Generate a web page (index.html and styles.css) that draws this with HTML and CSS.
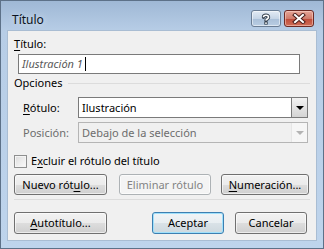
FILE: index.html
```html
<!DOCTYPE html>
<html lang="es">
<head>
    <meta charset="UTF-8">
    <title>Título</title>
    <link rel="stylesheet" href="styles.css">
</head>
<body>
    <div class="window">
        <div class="titlebar">
            <span class="caption">Título</span>
            <div class="cap-buttons">
                <span class="cap-btn help">
                    <svg width="14" height="12" viewBox="0 0 14 12">
                        <path d="M4.5 4.2 C4.5 1.6 9.5 1.6 9.5 4.2 C9.5 6 7 6 7 7.6" fill="none" stroke="#34404e" stroke-width="3.4" stroke-linecap="round"/>
                        <rect x="5.3" y="8.6" width="3.4" height="3" fill="#34404e"/>
                        <path d="M4.5 4.2 C4.5 1.6 9.5 1.6 9.5 4.2 C9.5 6 7 6 7 7.6" fill="none" stroke="#fff" stroke-width="1.6"/>
                        <rect x="6.2" y="9.4" width="1.6" height="1.5" fill="#fff"/>
                    </svg>
                </span>
                <span class="cap-btn close">
                    <svg width="16" height="11" viewBox="0 0 16 11">
                        <path d="M4 2 L12 9 M12 2 L4 9" stroke="#4a1d1a" stroke-width="4" stroke-linecap="square"/>
                        <path d="M4 2 L12 9 M12 2 L4 9" stroke="#fff" stroke-width="2" stroke-linecap="square"/>
                    </svg>
                </span>
            </div>
        </div>

        <div class="client">
            <div class="field-label"><u>T</u>ítulo:</div>
            <div class="textbox"><span class="value">Ilustración 1</span><span class="caret"></span></div>

            <div class="group-title">
                <span>Opciones</span>
                <span class="rule"></span>
            </div>

            <div class="opt-row">
                <span class="opt-label"><u>R</u>ótulo:</span>
                <div class="combo">
                    <span class="combo-text">Ilustración</span>
                    <span class="drop"><span class="arrow"></span></span>
                </div>
            </div>
            <div class="opt-row disabled">
                <span class="opt-label">Posición:</span>
                <div class="combo">
                    <span class="combo-text">Debajo de la selección</span>
                    <span class="drop"><span class="arrow"></span></span>
                </div>
            </div>

            <div class="check-row">
                <span class="checkbox"></span>
                <span>E<u>x</u>cluir el rótulo del título</span>
            </div>

            <div class="btn-row">
                <span class="btn w-93">Nuevo rót<u>u</u>lo...</span>
                <span class="btn w-92 off">Eliminar rótulo</span>
                <span class="btn w-88"><u>N</u>umeración...</span>
            </div>

            <div class="separator"></div>

            <div class="btn-row bottom">
                <span class="btn w-93"><u>A</u>utotítulo...</span>
                <span class="btn w-72 default">Aceptar</span>
                <span class="btn w-72">Cancelar</span>
            </div>
        </div>
    </div>
</body>
</html>
```

FILE: styles.css
```css
body {
    margin: 0;
    font-family: "Noto Sans", "Open Sans", sans-serif;
    font-size: 11px;
    line-height: 16px;
    color: #000;
}
u {
    text-decoration-thickness: 1px;
    text-underline-offset: 2px;
}
.window {
    display: flex;
    flex-direction: column;
    box-sizing: border-box;
    width: 324px;
    height: 249px;
    padding: 0 6px 7px;
    border: 1px solid #5d7188;
    background: linear-gradient(#9fb8d5, #b7cde6 30px, #bed4ec);
}
.titlebar {
    display: flex;
    height: 29px;
}
.caption {
    margin: 11px 0 0 5px;
    font-size: 12px;
    color: #0a1220;
    text-shadow: 0 0 6px rgba(255, 255, 255, .7);
}
.cap-buttons {
    display: flex;
    gap: 3px;
    margin: 9px 3px 0 auto;
}
.cap-btn {
    display: flex;
    align-items: center;
    justify-content: center;
    box-sizing: border-box;
    width: 30px;
    height: 17px;
    border-radius: 3px;
}
.help {
    border: 1px solid #6a7d94;
    background: linear-gradient(#e3ebf4, #c6d5e6 50%, #a9bfd8 51%, #b9cde3);
    box-shadow: inset 0 0 0 1px rgba(255, 255, 255, .5);
}
.close {
    border: 1px solid #6d2a24;
    background: linear-gradient(#e6a597, #d07b6b 50%, #bf4a38 51%, #cf6e58);
    box-shadow: inset 0 0 0 1px rgba(255, 220, 210, .5);
}

.client {
    flex: 1;
    padding: 5px 0 0;
    border: 1px solid #a9bdd3;
    background: #f0f0f0;
}
.field-label {
    margin-left: 6px;
}
.textbox {
    display: flex;
    align-items: center;
    box-sizing: border-box;
    width: 282px;
    height: 20px;
    margin: 2px 0 0 10px;
    padding-left: 3px;
    border: 1px solid #7a7a7a;
    background: #fff;
}
.textbox .value {
    font-style: italic;
    color: #595959;
}
.caret {
    width: 1px;
    height: 14px;
    margin-left: 2px;
    background: #000;
}
.group-title {
    display: flex;
    align-items: center;
    gap: 6px;
    margin: 1px 6px 0 6px;
}
.group-title .rule {
    flex: 1;
    height: 1px;
    margin-top: 1px;
    background: #dcdcdc;
}
.opt-row {
    display: flex;
    align-items: center;
    margin: 6px 0 0 15px;
}
.opt-row + .opt-row {
    margin-top: 4px;
}
.opt-label {
    width: 55px;
}
.combo {
    display: flex;
    align-items: center;
    box-sizing: border-box;
    width: 230px;
    height: 21px;
    padding-left: 3px;
    border: 1px solid #7a7a7a;
    background: #fff;
}
.combo-text {
    flex: 1;
}
.drop {
    display: flex;
    align-items: center;
    justify-content: center;
    box-sizing: border-box;
    width: 16px;
    height: 19px;
    border-left: 1px solid #7a7a7a;
    background: linear-gradient(#f2f2f2, #e3e3e3 50%, #d4d4d4);
}
.arrow {
    width: 0;
    height: 0;
    border-left: 4px solid transparent;
    border-right: 4px solid transparent;
    border-top: 4px solid #000;
}
.disabled {
    color: #6d6d6d;
}
.disabled .combo {
    border-color: #b5b5b5;
    background: #f0f0f0;
}
.disabled .drop {
    border-left: 1px solid #e6e6e6;
    background: #f6f6f6;
}
.disabled .arrow {
    border-top-color: #b3b3b3;
}
.check-row {
    display: flex;
    align-items: center;
    gap: 4px;
    margin: 10px 0 0 6px;
}
.checkbox {
    box-sizing: border-box;
    width: 13px;
    height: 13px;
    border: 1px solid #8e8f8f;
    background: linear-gradient(135deg, #dcdcdc, #fbfbfb);
    box-shadow: inset 0 0 0 1px #f4f4f4;
}
.btn-row {
    display: flex;
    gap: 10px;
    margin: 5px 0 0 6px;
}
.btn-row.bottom {
    margin-top: 12px;
}
.btn-row.bottom .w-72 {
    margin-left: 35px;
}
.btn-row.bottom .w-72 + .w-72 {
    margin-left: 1px;
}
.btn {
    display: flex;
    align-items: center;
    justify-content: center;
    box-sizing: border-box;
    height: 21px;
    border: 1px solid #707070;
    border-radius: 3px;
    background: linear-gradient(#f2f2f2, #ebebeb 50%, #dddddd 51%, #cfcfcf);
    box-shadow: inset 0 0 0 1px rgba(255, 255, 255, .6);
}
.bottom .btn {
    height: 22px;
}
.w-93 { width: 93px; }
.w-92 { width: 92px; margin-left: 2px; }
.w-88 { width: 88px; }
.w-72 { width: 72px; }
.btn.off {
    border-color: #adb2b5;
    background: #f4f4f4;
    color: #838383;
}
.btn.default {
    border-color: #3c7fb1;
    box-shadow: inset 0 0 0 1px #9fe0fb;
    background: linear-gradient(#f0f4f6, #e8eef1 50%, #d9e2e7 51%, #cdd8de);
}
.separator {
    height: 1px;
    margin: 4px 6px 0;
    background: #dcdcdc;
}
```
